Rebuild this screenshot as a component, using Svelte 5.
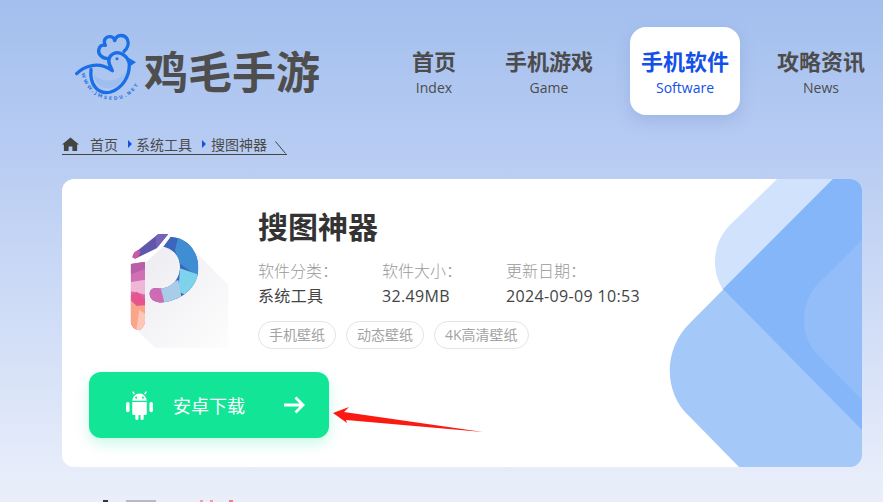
<script>
  const navItems = [
    { cn: '首页', en: 'Index' },
    { cn: '手机游戏', en: 'Game' },
    { cn: '手机软件', en: 'Software', active: true },
    { cn: '攻略资讯', en: 'News' }
  ];
  const meta = [
    { label: '软件分类：', value: '系统工具' },
    { label: '软件大小：', value: '32.49MB' },
    { label: '更新日期：', value: '2024-09-09 10:53' }
  ];
  const tags = ['手机壁纸', '动态壁纸', '4K高清壁纸'];
</script>

<div class="page">
  <header class="header">
    <div class="logo">
      <svg class="logo-mark" viewBox="0 0 225 225" aria-hidden="true">
        <path d="M72 135 C80 190 150 190 168 125 C150 150 110 165 72 135Z" fill="#8fb6f0" opacity=".5"/>
        <path d="M20 131 C42 108 85 92 127 122 M63 118 C58 165 85 195 122 186 C158 174 178 140 178 104 C176 82 158 68 140 68 C124 70 112 84 118 102 L127 122" fill="none" stroke="#1a6fe6" stroke-width="10" stroke-linecap="round" stroke-linejoin="round"/>
        <path d="M177 84 L198 97 L178 110Z" fill="#1a6fe6"/>
        <circle cx="141" cy="86" r="4.5" fill="#1a6fe6"/>
        <path d="M114 86 C96 86 82 72 87 56 C90 47 98 44 106 46 C98 30 108 18 122 20 C128 20 133 26 134 32 C140 12 164 12 172 28 C178 42 172 56 162 64" fill="none" stroke="#1a6fe6" stroke-width="10" stroke-linecap="round" stroke-linejoin="round"/>
        <path id="logo-arc" d="M34 130 C55 225 175 240 212 150" fill="none"/>
        <text class="logo-url"><textPath href="#logo-arc" startOffset="0">WWW.JMSEDU.NET</textPath></text>
      </svg>
      <span class="logo-text">鸡毛手游</span>
    </div>
    <nav class="nav">
      {#each navItems as item}
        <a class="nav-item" class:active={item.active} href="#top">
          <span class="nav-cn">{item.cn}</span>
          <span class="nav-en">{item.en}</span>
        </a>
      {/each}
    </nav>
  </header>

  <div class="crumbs">
    <svg class="home" viewBox="0 0 18 15" aria-hidden="true">
      <path d="M9 0 L18 7.6 L16 7.6 L16 14.5 L11 14.5 L11 9.5 L7 9.5 L7 14.5 L2 14.5 L2 7.6 L0 7.6Z" fill="#444"/>
    </svg>
    <span class="crumb first">首页</span>
    <i class="sep"></i>
    <span class="crumb">系统工具</span>
    <i class="sep wide"></i>
    <span class="crumb">搜图神器</span>
    <svg class="slash" viewBox="0 0 11 13" aria-hidden="true"><path d="M0.5 0.5 L10.5 12.5" stroke="#444" fill="none"/></svg>
  </div>

  <section class="card">
    <svg class="deco" viewBox="0 0 210 288" aria-hidden="true">
      <path d="M125 0 L80 44 C60 62 58 92 72 112 L210 251 L210 0Z" fill="#d1e3fc"/>
      <path d="M181 0 L38 144 C11 170 11 214 38 238 L87 288 L210 288 L210 0Z" fill="#a4c8f8"/>
      <path d="M181 0 L71 110 L210 251 L210 0Z" fill="#86b6fa"/>
      <path d="M210 61 L170 101 C146 121 146 160 170 180 L210 221Z" fill="#93bdf8"/>
    </svg>

    <div class="top">
      <svg class="app-icon" viewBox="0 0 450 480" aria-hidden="true">
        <defs>
          <linearGradient id="sh" x1="0" y1="0" x2="1" y2="1">
            <stop offset="0" stop-color="#eceaef"/>
            <stop offset="1" stop-color="#fdfdfd"/>
          </linearGradient>
          <clipPath id="stem"><path d="M92 192 L135 185 L135 365 Q130 390 113 390 Q95 385 92 365Z"/></clipPath>
          <clipPath id="swoosh"><path d="M97 172 Q100 155 115 150 L175 102 L205 102 L170 145 Q130 165 105 176Z"/></clipPath>
          <clipPath id="bowl"><path d="M190 140 L212 110 C270 115 295 160 295 205 C295 265 240 305 180 308 Q150 305 148 280 Q152 262 170 265 C215 270 240 235 240 200 C240 165 215 145 190 140Z"/></clipPath>
        </defs>
        <path d="M290 160 L385 255 L385 443 L165 443 L105 385 L135 320 L135 190 L200 130Z" fill="url(#sh)"/>
        <g clip-path="url(#stem)">
          <rect x="85" y="180" width="60" height="215" fill="#cf6fb4"/>
          <path d="M85 180 H140 V205 L85 225Z" fill="#b95ea8"/>
          <path d="M85 248 L140 238 V285 L85 272Z" fill="#efb6d6"/>
          <path d="M85 290 L110 275 L140 300 V315 L110 318 L85 295Z" fill="#e6558f"/>
          <path d="M85 295 L110 318 L140 315 V400 H85Z" fill="#f9a587"/>
          <path d="M108 395 L118 330 L140 345 V395Z" fill="#fcc6b8"/>
        </g>
        <g clip-path="url(#swoosh)">
          <rect x="90" y="95" width="120" height="90" fill="#5f57ad"/>
          <path d="M90 180 V150 L122 152 L112 180Z" fill="#d257a0"/>
          <path d="M165 95 H210 V112 L170 145Z" fill="#7464b8"/>
        </g>
        <g clip-path="url(#bowl)">
          <rect x="140" y="100" width="160" height="215" fill="#3b66bb"/>
          <path d="M235 110 L300 160 V235 L238 190 L225 150Z" fill="#3f8dd3"/>
          <path d="M240 205 L300 225 L270 290 L235 275Z" fill="#7fd2eb"/>
          <path d="M180 262 L235 240 L245 295 L190 315Z" fill="#a9cde9"/>
          <path d="M140 255 H180 L195 315 H140Z" fill="#d16ab4"/>
        </g>
      </svg>
      <div class="info">
        <h1>搜图神器</h1>
        <div class="meta">
          {#each meta as m}
            <div class="meta-col">
              <div class="meta-label">{m.label}</div>
              <div class="meta-value">{m.value}</div>
            </div>
          {/each}
        </div>
        <div class="tags">
          {#each tags as t}<span class="tag">{t}</span>{/each}
        </div>
      </div>
    </div>

    <a class="download" href="#top">
      <svg class="android" viewBox="0 0 28 28" aria-hidden="true">
        <path d="M7 9.5 A7 7 0 0 1 21 9.5Z" fill="#fff"/>
        <path d="M9 3 L7.5 .5 M19 3 L20.5 .5" stroke="#fff" stroke-width="1.4" fill="none"/>
        <circle cx="10.8" cy="6.4" r="1" fill="#13e596"/>
        <circle cx="17.2" cy="6.4" r="1" fill="#13e596"/>
        <path d="M7 10.5 H21 V22 Q21 23.2 19.6 23.2 H8.4 Q7 23.2 7 22Z" fill="#fff"/>
        <rect x="10" y="22" width="3" height="6" rx="1.5" fill="#fff"/>
        <rect x="15" y="22" width="3" height="6" rx="1.5" fill="#fff"/>
        <rect x="1" y="10.5" width="3.4" height="10" rx="1.7" fill="#fff"/>
        <rect x="23.6" y="10.5" width="3.4" height="10" rx="1.7" fill="#fff"/>
      </svg>
      <span class="dl-text">安卓下载</span>
      <svg class="dl-arrow" viewBox="0 0 22 18" aria-hidden="true">
        <path d="M1 9 H20 M12.5 1.5 L20 9 L12.5 16.5" stroke="#fff" stroke-width="2.8" fill="none"/>
      </svg>
    </a>
  </section>

  <div class="next">
    <span class="next-ico"></span>
    <span class="next-bar"></span>
    <span class="next-red first-red"></span>
    <span class="next-red"></span>
    <span class="next-red last-red"></span>
  </div>

  <svg class="red-arrow" viewBox="0 0 152 28" aria-hidden="true">
    <path d="M1 8 L17 2 L12 7 L151 27 L14 15 L15 18Z" fill="#fb1a12"/>
  </svg>
</div>

<style>
  :global(body) {
    margin: 0;
    background: #e8edfa;
  }
  .page {
    position: relative;
    width: 883px;
    height: 502px;
    overflow: hidden;
    background: linear-gradient(180deg, #a3bfee 0, #b6cbf2 140px, #e6ecfa 470px, #e9eefa 502px);
    font-family: "Noto Sans CJK SC", "Noto Sans", sans-serif;
    box-sizing: border-box;
    padding-left: 62px;
  }
  .header {
    display: flex;
    height: 115px;
    padding-top: 27px;
    box-sizing: border-box;
  }
  .logo {
    display: flex;
    align-items: flex-start;
    width: 338px;
    padding-left: 8px;
    box-sizing: border-box;
  }
  .logo-mark {
    width: 75px;
    height: 75px;
    margin-top: 3px;
    flex: none;
  }
  .logo-url {
    font: 700 14px "DejaVu Sans", sans-serif;
    letter-spacing: 6px;
    fill: #2b78e4;
  }
  .logo-text {
    margin: 13px 0 0 -1px;
    font-size: 44px;
    line-height: 60px;
    font-weight: 700;
    color: #4e4e4e;
    white-space: nowrap;
  }
  .nav {
    display: flex;
    gap: 26px;
  }
  .nav-item {
    display: flex;
    flex-direction: column;
    align-items: center;
    width: 110px;
    height: 88px;
    border-radius: 16px;
    box-sizing: border-box;
    text-decoration: none;
    color: #4c4c4c;
    padding-top: 17px;
  }
  .nav-item:first-child { width: 68px; }
  .nav-item.active {
    background: #fff;
    color: #1250e8;
    box-shadow: 0 6px 16px rgba(90, 120, 190, .22);
  }
  .nav-cn {
    font-size: 22px;
    line-height: 32px;
    font-weight: 700;
    white-space: nowrap;
  }
  .nav-en {
    font-family: "Open Sans", sans-serif;
    font-size: 14px;
    line-height: 20px;
    margin-top: 2px;
    font-weight: 400;
  }
  .crumbs {
    display: flex;
    align-items: center;
    width: 225px;
    height: 18px;
    margin-top: 20px;
    padding-bottom: 1px;
    border-bottom: 1px solid #444;
    font-size: 14px;
    line-height: 18px;
    color: #4a4a4a;
    position: relative;
  }
  .home {
    width: 17px;
    height: 15px;
    flex: none;
  }
  .first { margin-left: 11px; }
  .sep {
    width: 0;
    height: 0;
    margin: 0 4px 0 10px;
    border-left: 4px solid #1250e8;
    border-top: 4px solid transparent;
    border-bottom: 4px solid transparent;
  }
  .sep.wide { margin-right: 5px; }
  .crumb { white-space: nowrap; }
  .slash {
    width: 11px;
    height: 13px;
    margin-left: 8px;
    margin-top: 6px;
    flex: none;
  }
  .card {
    position: relative;
    width: 800px;
    height: 288px;
    margin-top: 24px;
    border-radius: 12px;
    background: #fff;
    overflow: hidden;
    box-sizing: border-box;
    padding: 21px 27px 0;
  }
  .deco {
    position: absolute;
    right: 0;
    top: 0;
    width: 210px;
    height: 288px;
  }
  .top {
    display: grid;
    grid-template-columns: 169px 1fr;
    height: 172px;
    position: relative;
  }
  .app-icon {
    width: 150px;
    height: 160px;
    margin-left: 11px;
  }
  .info { padding-top: 4px; }
  h1 {
    margin: 0;
    font-size: 30px;
    line-height: 42px;
    font-weight: 700;
    color: #333;
  }
  .meta {
    display: flex;
    margin-top: 11px;
  }
  .meta-col { width: 124px; white-space: nowrap; }
  .meta-label {
    font-size: 16px;
    line-height: 26px;
    color: #999;
    font-weight: 300;
  }
  .meta-value {
    font-family: "Open Sans", "Noto Sans CJK SC", sans-serif;
    font-size: 16px;
    line-height: 26px;
    letter-spacing: .35px;
    color: #444;
  }
  .tags {
    display: flex;
    gap: 10px;
    margin-top: 12px;
  }
  .tag {
    height: 28px;
    line-height: 26px;
    padding: 0 10px;
    box-sizing: border-box;
    border: 1px solid #e4e4e4;
    border-radius: 14px;
    font-family: "Open Sans", "Noto Sans CJK SC", sans-serif;
    font-size: 14px;
    color: #a3a3a3;
    white-space: nowrap;
  }
  .download {
    position: relative;
    display: flex;
    align-items: center;
    width: 240px;
    height: 66px;
    border-radius: 12px;
    background: #13e596;
    box-shadow: 0 6px 14px rgba(19, 229, 150, .22);
    text-decoration: none;
    padding-left: 36px;
    box-sizing: border-box;
  }
  .android { width: 29px; height: 29px; flex: none; }
  .dl-text {
    margin-left: 19px;
    font-size: 18px;
    color: #fff;
    font-weight: 400;
  }
  .dl-arrow {
    width: 22px;
    height: 18px;
    margin-left: 38px;
    flex: none;
  }
  .next {
    display: flex;
    align-items: flex-start;
    height: 10px;
    margin-top: 33px;
    padding-left: 41px;
  }
  .next-ico { width: 5px; height: 10px; background: #334; }
  .next-bar { width: 30px; height: 10px; margin-left: 18px; background: #b9b8c4; }
  .next-red { width: 3px; height: 10px; margin-left: 7px; background: #f99; }
  .first-red { margin-left: 44px; }
  .last-red { margin-left: 16px; width: 4px; background: #f77; }
  .red-arrow {
    position: absolute;
    left: 332px;
    top: 405px;
    width: 152px;
    height: 28px;
  }
</style>
